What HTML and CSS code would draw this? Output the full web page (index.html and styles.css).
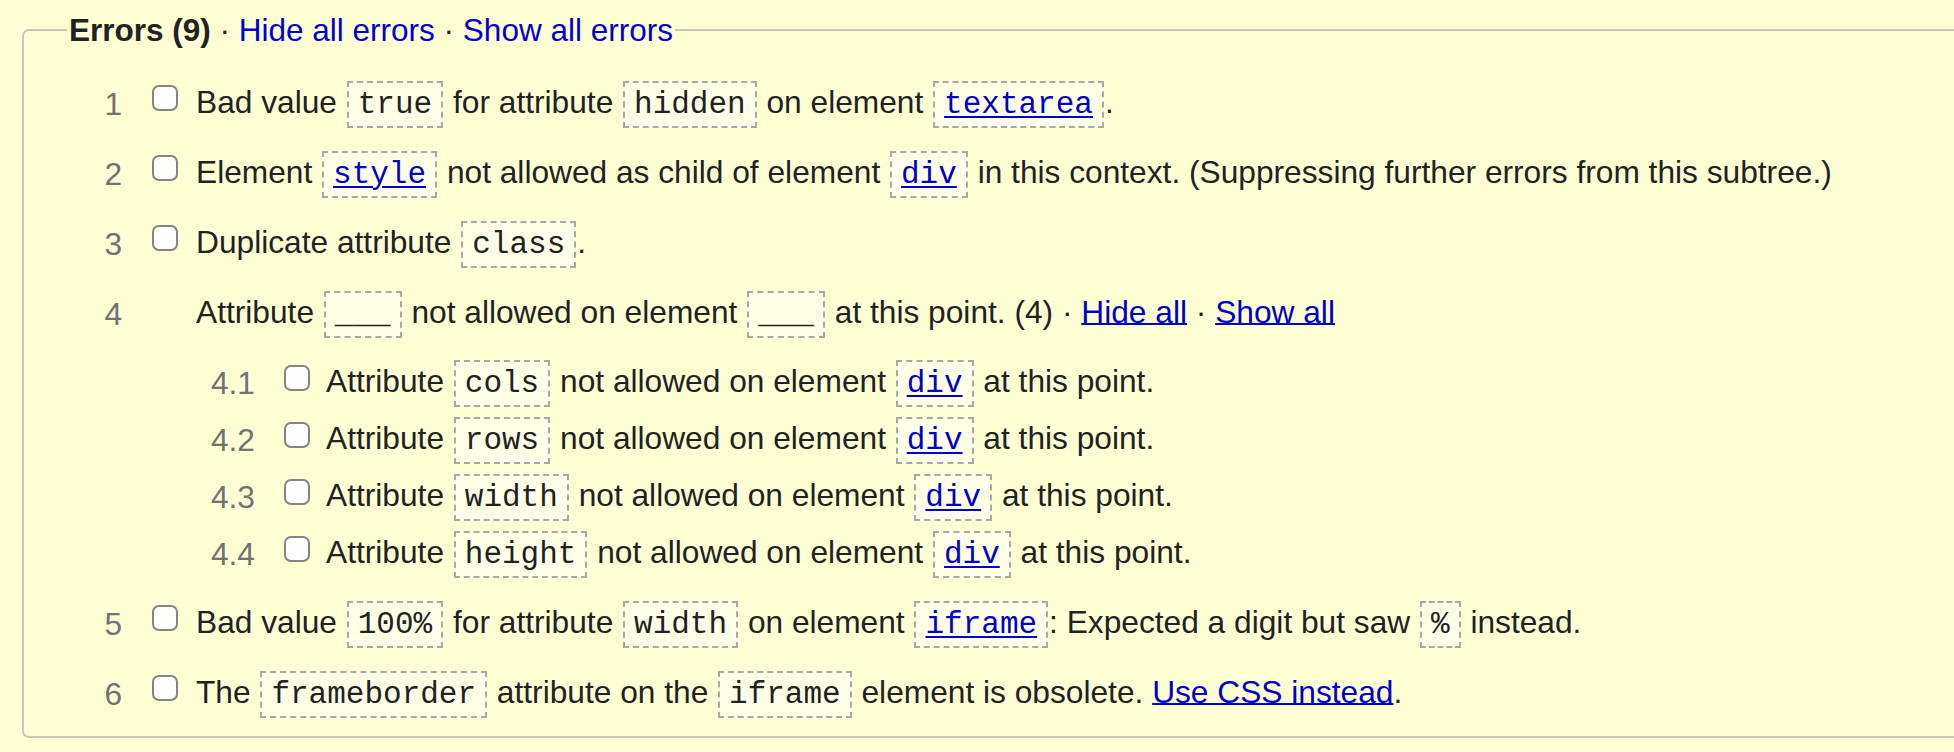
FILE: index.html
```html
<!DOCTYPE html>
<html lang="en">
<head>
<meta charset="utf-8">
<title>Errors</title>
<link rel="stylesheet" href="styles.css">
</head>
<body>
<fieldset class="errors">
  <legend class="errors-legend"><strong class="legend-title">Errors (9)</strong> · <a class="toggle" href="#">Hide all errors</a> · <a class="toggle" href="#">Show all errors</a></legend>
  <ol class="list">
    <li class="row"><span class="num">1</span><input type="checkbox" class="check"><span class="msg">Bad value <code class="code">true</code> for attribute <code class="code">hidden</code> on element <a class="code link" href="#">textarea</a>.</span></li>
    <li class="row"><span class="num">2</span><input type="checkbox" class="check"><span class="msg">Element <a class="code link" href="#">style</a> not allowed as child of element <a class="code link" href="#">div</a> in this context. (Suppressing further errors from this subtree.)</span></li>
    <li class="row"><span class="num">3</span><input type="checkbox" class="check"><span class="msg">Duplicate attribute <code class="code">class</code>.</span></li>
    <li class="group">
      <div class="row"><span class="num">4</span><span class="check-space"></span><span class="msg">Attribute <code class="code">___</code> not allowed on element <code class="code">___</code> at this point. (4) · <a class="inline-link" href="#">Hide all</a> · <a class="inline-link" href="#">Show all</a></span></div>
      <ol class="sublist">
        <li class="row sub"><span class="num">4.1</span><input type="checkbox" class="check"><span class="msg">Attribute <code class="code">cols</code> not allowed on element <a class="code link" href="#">div</a> at this point.</span></li>
        <li class="row sub"><span class="num">4.2</span><input type="checkbox" class="check"><span class="msg">Attribute <code class="code">rows</code> not allowed on element <a class="code link" href="#">div</a> at this point.</span></li>
        <li class="row sub"><span class="num">4.3</span><input type="checkbox" class="check"><span class="msg">Attribute <code class="code">width</code> not allowed on element <a class="code link" href="#">div</a> at this point.</span></li>
        <li class="row sub"><span class="num">4.4</span><input type="checkbox" class="check"><span class="msg">Attribute <code class="code">height</code> not allowed on element <a class="code link" href="#">div</a> at this point.</span></li>
      </ol>
    </li>
    <li class="row"><span class="num">5</span><input type="checkbox" class="check"><span class="msg">Bad value <code class="code">100%</code> for attribute <code class="code">width</code> on element <a class="code link" href="#">iframe</a>: Expected a digit but saw <code class="code">%</code> instead.</span></li>
    <li class="row"><span class="num">6</span><input type="checkbox" class="check"><span class="msg">The <code class="code">frameborder</code> attribute on the <code class="code">iframe</code> element is obsolete. <a class="inline-link" href="#">Use CSS instead</a>.</span></li>
  </ol>
</fieldset>
</body>
</html>
```
FILE: styles.css
```css
html, body {
  margin: 0;
  padding: 0;
}

body {
  background: #ffffd4;
  font-family: "Liberation Sans", Arial, Helvetica, sans-serif;
  font-size: 31.7px;
  color: #222;
  overflow: hidden;
}

.errors {
  margin: 12px 0 0 22px;
  width: 2100px;
  box-sizing: border-box;
  border: 2px solid #c6c6bc;
  border-radius: 7px;
  padding: 21px 0 7px 0;
  min-width: 0;
}

.errors-legend {
  margin-left: 43px;
  padding: 0 2px;
  line-height: 36px;
  white-space: nowrap;
  font-size: 31.5px;
}

.legend-title {
  font-weight: bold;
}

.toggle {
  color: #0000d6;
  text-decoration: none;
}

.list,
.sublist {
  list-style: none;
  margin: 0;
  padding: 0;
}

.sublist {
  margin: 6px 0;
  padding-left: 133px;
}

.row {
  display: flex;
  align-items: center;
  height: 70px;
  white-space: nowrap;
}

.row.sub {
  height: 57px;
}

.num {
  width: 98px;
  flex: none;
  text-align: right;
  color: #727272;
  margin-right: 30px;
}

.sub .num {
  margin-right: 29px;
}

.check {
  appearance: none;
  -webkit-appearance: none;
  flex: none;
  width: 26px;
  height: 26px;
  margin: 0 18px 12px 0;
  box-sizing: border-box;
  border: 2px solid #848484;
  border-radius: 7px;
  background: #fdfdfb;
}

.sub .check {
  margin-right: 16px;
}

.check-space {
  flex: none;
  width: 26px;
  margin-right: 18px;
}

.msg {
  line-height: 36px;
}

.code {
  display: inline-block;
  font-family: "Liberation Mono", "Courier New", monospace;
  font-size: 31px;
  line-height: 43px;
  padding: 0 9px;
  margin: 0 1px;
  border: 2px dashed #a8a8a8;
  background: #ffffe8;
  color: #222;
  vertical-align: middle;
}

.code.link {
  color: #0000cc;
  text-decoration: underline;
  text-decoration-thickness: 2px;
  text-underline-offset: 3px;
}

.inline-link {
  color: #0000cc;
  text-decoration: underline;
  text-decoration-thickness: 2px;
}
```
